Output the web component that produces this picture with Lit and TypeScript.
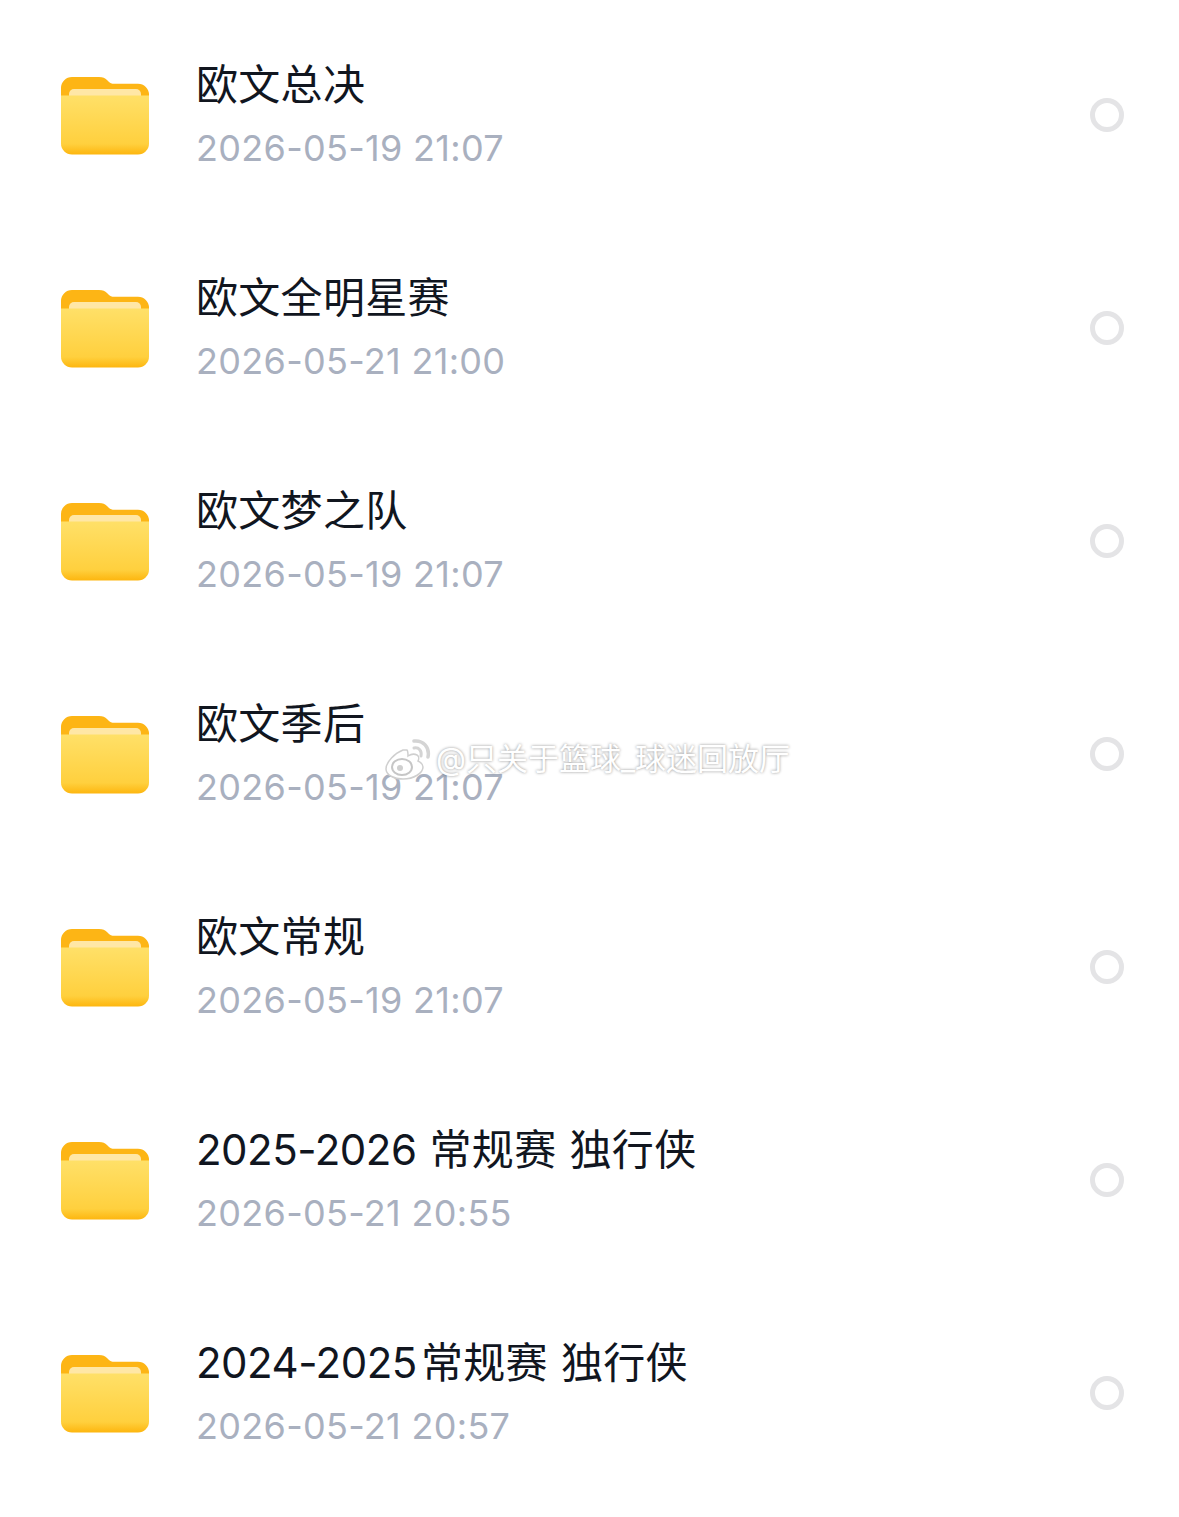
import { LitElement, css, html } from 'lit'
import { customElement } from 'lit/decorators.js'

interface FolderRow {
  title: string
  date: string
}

const ROWS: FolderRow[] = [
  { title: '欧文总决', date: '2026-05-19 21:07' },
  { title: '欧文全明星赛', date: '2026-05-21 21:00' },
  { title: '欧文梦之队', date: '2026-05-19 21:07' },
  { title: '欧文季后', date: '2026-05-19 21:07' },
  { title: '欧文常规', date: '2026-05-19 21:07' },
  { title: '2025-2026 常规赛 独行侠', date: '2026-05-21 20:55' },
  { title: '2024-2025\u200a常规赛 独行侠', date: '2026-05-21 20:57' },
]

const folderIcon = (i: number) => html`
  <svg class="folder" viewBox="0 0 90 80" width="90" height="80">
    <defs>
      <linearGradient id="front${i}" x1="0" y1="0" x2="0" y2="1">
        <stop offset="0" stop-color="#ffe068" />
        <stop offset="0.82" stop-color="#ffd03e" />
        <stop offset="1" stop-color="#fdb60f" />
      </linearGradient>
    </defs>
    <path
      d="M1 12a11 11 0 0 1 11-11h27c4 0 6 1 8 3l1.500 1.500c1.500 1.500 3 2.300 6 2.300h23.500a11 11 0 0 1 11 11v20H1z"
      fill="#fdb515"
    />
    <rect x="9" y="13" width="72" height="20" rx="5" fill="#ffe7a6" />
    <path
      d="M1 19.500h88v48a11 11 0 0 1-11 11H12a11 11 0 0 1-11-11z"
      fill="url(#front${i})"
    />
  </svg>
`

// Latin digits at the head of a title sit slightly tighter than the CJK after them
const titleParts = (title: string) => {
  const m = title.match(/^[\d-]+/)
  if (!m) return title
  return html`<span class="num">${m[0]}</span>${title.slice(m[0].length)}`
}

@customElement('app-root')
export class AppRoot extends LitElement {
  render() {
    return html`
      <div class="page">
        ${ROWS.map(
          (row, i) => html`
            <div class="row">
              ${folderIcon(i)}
              <div class="text">
                <div class="title">${titleParts(row.title)}</div>
                <div class="date">${row.date}</div>
              </div>
              <div class="radio"></div>
            </div>
          `,
        )}
        <div class="watermark">
          <svg class="weibo" viewBox="0 0 46 42" width="46" height="42">
            <path
              d="M18 12c-8 3-17 12-17 19 0 6 8 10 17 10 11 0 20-6 20-12 0-3-3-5-5-6 1-2 1-5-1-6-2-1-6-1-9 1 0-3 0-5-1-6-1 0-3 0-4 0z"
              fill="#fff"
              stroke="#cfcfcf"
              stroke-width="1.500"
            />
            <ellipse cx="17" cy="29" rx="10" ry="8" fill="#fff" stroke="#c6c6c6" stroke-width="2" />
            <circle cx="15" cy="30" r="3" fill="#cfcfcf" />
            <path d="M29 10c5-1 8 3 7 8" fill="none" stroke="#d4d4d4" stroke-width="3" stroke-linecap="round" />
            <path d="M29 3c9-1 16 6 14 16" fill="none" stroke="#d4d4d4" stroke-width="3.500" stroke-linecap="round" />
          </svg>
          <span>@只关于篮球_球迷回放厅</span>
        </div>
      </div>
    `
  }

  static styles = css`
    :host {
      display: block;
    }

    .page {
      position: relative;
      height: 1517px;
      padding-top: 8px;
      box-sizing: border-box;
      background: #fff;
      font-family: Inter, 'Noto Sans CJK SC', sans-serif;
      overflow: hidden;
    }

    .row {
      display: flex;
      align-items: center;
      height: 213px;
      padding: 0 55px 0 60px;
    }

    .folder {
      flex: none;
      margin-top: 3px;
    }

    .text {
      flex: 1;
      display: flex;
      flex-direction: column;
      gap: 16px;
      margin-left: 46px;
      margin-top: 1px;
    }

    .title {
      font-size: 42px;
      line-height: 50px;
      letter-spacing: 0.3px;
      word-spacing: 1px;
      color: #11161f;
    }

    .num {
      letter-spacing: -0.5px;
    }

    .date {
      font-size: 36px;
      line-height: 44px;
      letter-spacing: 0.3px;
      color: #a9b0bf;
    }

    .radio {
      flex: none;
      width: 34px;
      height: 34px;
      box-sizing: border-box;
      border: 5px solid #e4e4e6;
      border-radius: 50%;
    }

    .watermark {
      position: absolute;
      left: 385px;
      top: 738px;
      display: flex;
      align-items: center;
      gap: 5px;
      color: #fff;
      font-size: 31px;
      line-height: 42px;
      white-space: nowrap;
      text-shadow: 0 0 3px rgba(0, 0, 0, 0.45);
    }
  `
}
